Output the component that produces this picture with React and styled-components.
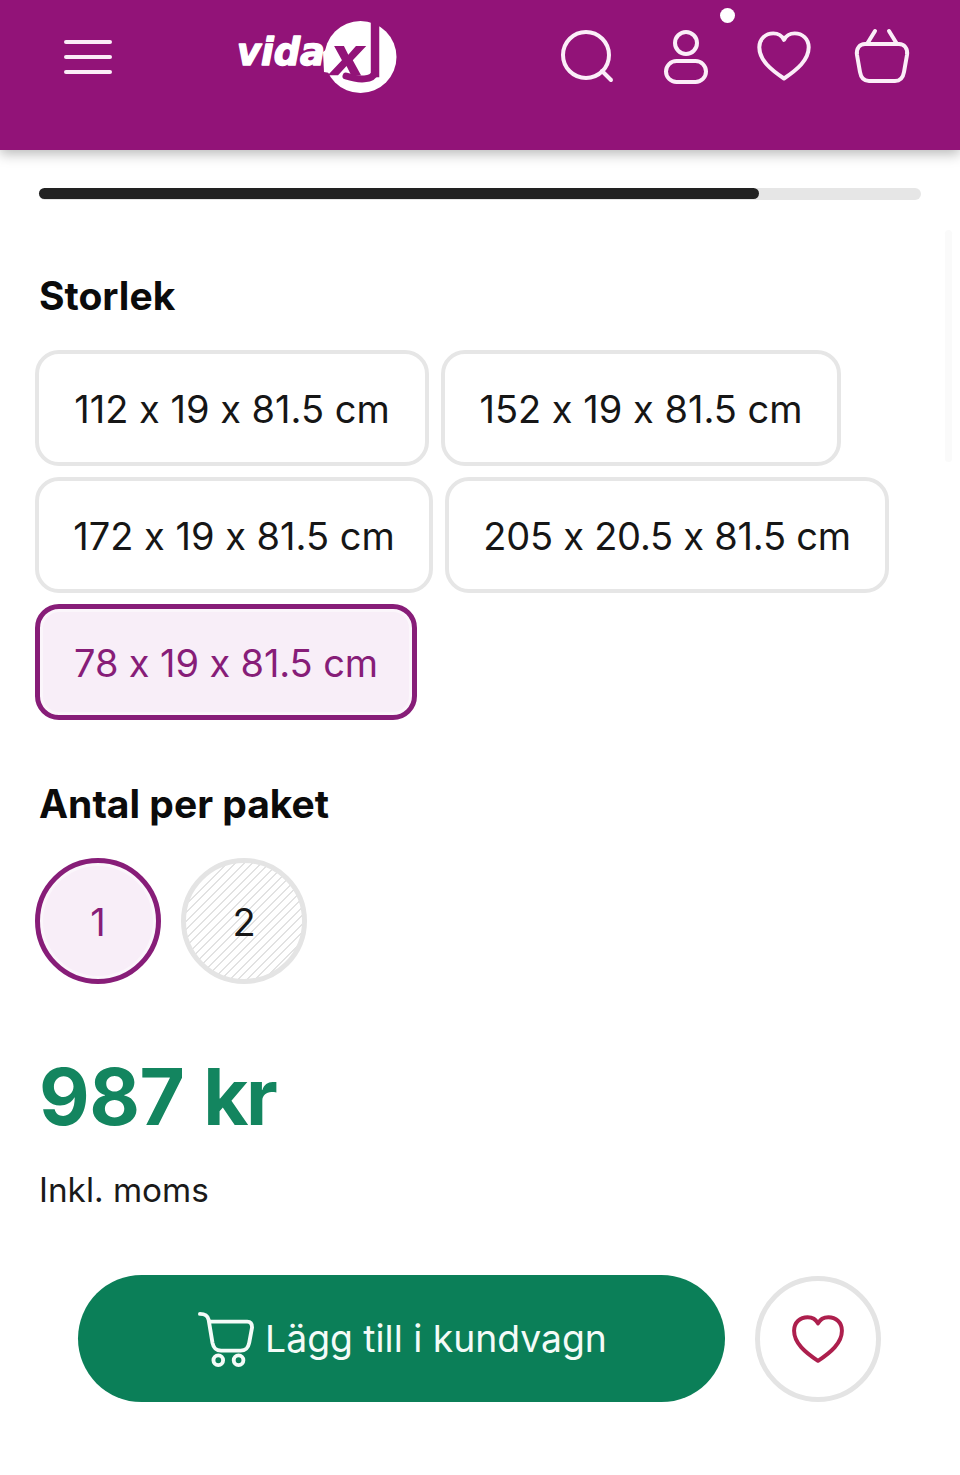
import React from 'react';
import styled, { createGlobalStyle } from 'styled-components';

const GlobalStyle = createGlobalStyle`
  html, body {
    margin: 0;
    padding: 0;
    background: #fff;
  }
  body {
    font-family: Inter, "Liberation Sans", sans-serif;
    font-feature-settings: "calt" 0;
    color: #111;
  }
  button {
    font-feature-settings: "calt" 0;
  }
`;

const Page = styled.div`
  width: 960px;
  height: 1475px;
  overflow: hidden;
  position: relative;
`;

const Header = styled.header`
  height: 150px;
  background: #921378;
  box-shadow: 0 4px 12px rgba(0, 0, 0, 0.28);
  display: flex;
  align-items: flex-start;
  position: relative;
`;

const Burger = styled.div`
  margin: 40px 0 0 64px;
  width: 48px;
  height: 34px;
  display: flex;
  flex-direction: column;
  justify-content: space-between;
  span {
    display: block;
    height: 4px;
    border-radius: 2px;
    background: #fbeef8;
  }
`;

const LogoWrap = styled.div`
  margin: 18px 0 0 124px;
  width: 164px;
  height: 78px;
  svg {
    overflow: visible;
  }
`;

const HeaderIcons = styled.div`
  margin: 28px 0 0 auto;
  padding-right: 49px;
  display: flex;
  gap: 40px;
`;

const Dot = styled.span`
  position: absolute;
  left: 720px;
  top: 8px;
  width: 15px;
  height: 15px;
  border-radius: 50%;
  background: #fff;
`;

const Track = styled.div`
  margin: 38px 39px 0;
  height: 12px;
  border-radius: 6px;
  background: #e6e6e6;
`;

const Fill = styled.div`
  width: 720px;
  height: 11px;
  border-radius: 6px;
  background: #222;
`;

const ScrollHint = styled.div`
  position: absolute;
  left: 945px;
  top: 230px;
  width: 7px;
  height: 232px;
  border-radius: 4px;
  background: #fafafa;
`;

const Section = styled.section`
  padding: 0 35px;
`;

const Title = styled.h2`
  margin: ${(p) => p.$top}px 0 0 4px;
  font-size: 39px;
  line-height: 46px;
  font-weight: 700;
  color: #0b0b0b;
`;

const Chips = styled.div`
  margin-top: 31px;
  display: flex;
  flex-wrap: wrap;
  gap: 11px 12px;
  max-width: 880px;
`;

const Chip = styled.button`
  box-sizing: border-box;
  width: ${(p) => p.$width}px;
  height: 116px;
  padding: 2px 0 0;
  border-radius: 24px;
  font-family: inherit;
  font-size: 38px;
  font-weight: 400;
  letter-spacing: ${(p) => p.$tracking || 0}px;
  white-space: nowrap;
  border: ${(p) => (p.$active ? '5px solid #871d78' : '4.5px solid #e6e6e6')};
  background: ${(p) => (p.$active ? '#f8eef8' : '#fff')};
  box-shadow: ${(p) => (p.$active ? 'inset 0 0 0 3px #fbf6fb' : 'none')};
  color: ${(p) => (p.$active ? '#871d78' : '#161616')};
`;

const Rounds = styled.div`
  margin-top: 31px;
  display: flex;
  gap: 20px;
`;

const Round = styled.button`
  box-sizing: border-box;
  width: 126px;
  height: 126px;
  padding: 2px 0 0;
  border-radius: 50%;
  font-family: inherit;
  font-size: 38px;
  border: 5px solid ${(p) => (p.$active ? '#871d78' : '#e4e4e4')};
  box-shadow: ${(p) => (p.$active ? 'inset 0 0 0 3px #fbf6fb' : 'none')};
  color: ${(p) => (p.$active ? '#871d78' : '#161616')};
  background: ${(p) =>
    p.$active
      ? '#f8eef8'
      : 'repeating-linear-gradient(135deg, #fff 0 4.5px, #e2e2e2 4.5px 6px)'};
`;

const Price = styled.div`
  margin: 63px 0 0 4px;
  font-size: 78px;
  line-height: 100px;
  font-weight: 700;
  letter-spacing: -0.5px;
  word-spacing: 1px;
  color: #13855f;
`;

const Unit = styled.span`
  letter-spacing: -2.5px;
`;

const Tax = styled.div`
  margin: 23px 0 0 4px;
  font-size: 33.3px;
  line-height: 40px;
  color: #1a1a1a;
`;

const Actions = styled.div`
  margin: 65px 0 0 43px;
  display: flex;
  gap: 30px;
  align-items: center;
`;

const AddButton = styled.button`
  width: 647px;
  height: 127px;
  border: 0;
  border-radius: 64px;
  background: #0b7f58;
  color: #f4fbf8;
  font-family: inherit;
  font-size: 37.3px;
  display: flex;
  align-items: center;
  justify-content: center;
  gap: 11px;
  padding: 0 0 0 2px;
`;

const WishButton = styled.button`
  box-sizing: border-box;
  width: 126px;
  height: 126px;
  border-radius: 50%;
  border: 5px solid #e4e4e4;
  background: #fff;
  display: flex;
  align-items: center;
  justify-content: center;
  padding: 0;
`;

const HEART = 'M26 46 C14 38 3 29 3 17 C3 9 9 4 16 4 C20 4 24 6 26 10 C28 6 32 4 36 4 C43 4 49 9 49 17 C49 29 38 38 26 46 Z';

const Logo = () => (
  <svg width="164" height="78" viewBox="0 0 164 78">
    <text x="1" y="47" fill="#fff" stroke="#fff" strokeWidth="1.4" strokeLinejoin="round" fontFamily="'DejaVu Sans', sans-serif" fontSize="37" fontWeight="700" fontStyle="italic" textLength="88" lengthAdjust="spacingAndGlyphs">vida</text>
    <circle cx="124.5" cy="39" r="36" fill="#fff" />
    <path d="M87 34 L100 24 L100 56 L88 54 Z" fill="#fff" />
    <text x="94" y="57" fill="#921378" fontFamily="'DejaVu Sans', sans-serif" fontSize="54" fontWeight="700" fontStyle="italic">x</text>
    <text x="129" y="58" fill="#921378" stroke="#921378" strokeWidth="2" fontFamily="'DejaVu Sans', sans-serif" fontSize="72">l</text>
    <path d="M139 54 C137 63 122 62 110 58" fill="none" stroke="#921378" strokeWidth="7" strokeLinecap="round" />
  </svg>
);

const SearchIcon = () => (
  <svg width="58" height="58" viewBox="0 0 58 58" fill="none" stroke="#fbeef8" strokeWidth="4" strokeLinecap="round">
    <circle cx="27" cy="27" r="23" />
    <path d="M43 43 L52 52" />
  </svg>
);

const UserIcon = () => (
  <svg width="58" height="58" viewBox="0 0 58 58" fill="none" stroke="#fbeef8" strokeWidth="4">
    <circle cx="29" cy="15" r="11" />
    <rect x="9" y="33" width="40" height="21" rx="10.5" />
  </svg>
);

const HeartIcon = () => (
  <svg width="58" height="58" viewBox="-1 -1 54 54" fill="none" stroke="#fbeef8" strokeWidth="3.7" strokeLinejoin="round">
    <path d={HEART} />
  </svg>
);

const BasketIcon = () => (
  <svg width="58" height="58" viewBox="0 0 58 58" fill="none" stroke="#fbeef8" strokeWidth="4" strokeLinecap="round" strokeLinejoin="round">
    <path d="M4 27 C3 20 7 16 12 16 H46 C51 16 55 20 54 27 L51 44 C50 50 47 53 42 53 H16 C11 53 8 50 7 44 Z" />
    <path d="M14 16 L22 3 M44 16 L36 3" />
  </svg>
);

const CartIcon = () => (
  <svg width="56" height="58" viewBox="0 0 58 58" fill="none" stroke="#f4fbf8" strokeWidth="4" strokeLinecap="round" strokeLinejoin="round">
    <path d="M2 3 C8 3 10 5 11 9 L15 33 C16 38 18 41 24 41 H44 C50 41 52 38 53 33 L56 17 C56 13 54 11 51 11 H12" />
    <circle cx="21" cy="51" r="5" />
    <circle cx="42" cy="51" r="5" />
  </svg>
);

const sizes = [
  { label: '112 x 19 x 81.5 cm', width: 394 },
  { label: '152 x 19 x 81.5 cm', width: 400 },
  { label: '172 x 19 x 81.5 cm', width: 398 },
  { label: '205 x 20.5 x 81.5 cm', width: 444, tracking: -0.25 },
  { label: '78 x 19 x 81.5 cm', width: 382, tracking: -0.12, active: true },
];

export default function App() {
  return (
    <Page>
      <GlobalStyle />
      <Header>
        <Burger>
          <span />
          <span />
          <span />
        </Burger>
        <LogoWrap>
          <Logo />
        </LogoWrap>
        <HeaderIcons>
          <SearchIcon />
          <UserIcon />
          <HeartIcon />
          <BasketIcon />
        </HeaderIcons>
        <Dot />
      </Header>
      <Track>
        <Fill />
      </Track>
      <ScrollHint />
      <Section>
        <Title $top={73}>Storlek</Title>
        <Chips>
          {sizes.map((s) => (
            <Chip key={s.label} $width={s.width} $tracking={s.tracking} $active={s.active}>
              {s.label}
            </Chip>
          ))}
        </Chips>
        <Title $top={61}>Antal per paket</Title>
        <Rounds>
          <Round $active>1</Round>
          <Round>2</Round>
        </Rounds>
        <Price>
          987 <Unit>kr</Unit>
        </Price>
        <Tax>Inkl. moms</Tax>
        <Actions>
          <AddButton>
            <CartIcon />
            Lägg till i kundvagn
          </AddButton>
          <WishButton>
            <svg width="56" height="52" viewBox="0 0 52 50" fill="none" stroke="#ad1f4d" strokeWidth="3.8" strokeLinejoin="round">
              <path d={HEART} />
            </svg>
          </WishButton>
        </Actions>
      </Section>
    </Page>
  );
}
